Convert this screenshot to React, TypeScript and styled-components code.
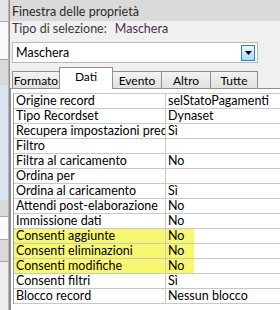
import { Fragment } from 'react';
import styled, { createGlobalStyle } from 'styled-components';

const Global = createGlobalStyle`
  html, body {
    margin: 0;
    padding: 0;
    width: 280px;
    height: 310px;
    overflow: hidden;
    background: #f0f0f0;
  }
  * {
    box-sizing: border-box;
  }
`;

const Frame = styled.div`
  display: flex;
  width: 280px;
  height: 310px;
  font-family: Lato, 'Noto Sans', sans-serif;
  font-size: 12.5px;
  color: #000;
`;

const Strip = styled.div`
  display: flex;
  flex-direction: column;
  width: 9px;
  border-right: 1px solid #b4b4b4;
`;

const StripBlock = styled.div<{ $h: number; $bg: string; $line?: boolean }>`
  height: ${(p) => p.$h}px;
  flex-shrink: 0;
  background: ${(p) => p.$bg};
  border-bottom: ${(p) => (p.$line ? '1px solid #a8a8a8' : 'none')};
`;

const Panel = styled.div`
  flex: 1;
  display: flex;
  flex-direction: column;
  border-left: 1px solid #8e8e8e;
  background: #f0f0f0;
  min-width: 0;
`;

const TitleBar = styled.div`
  height: 21px;
  background: #dadada;
  padding: 2px 0 0 2px;
  line-height: 19px;
  color: #2a2a2a;
  white-space: nowrap;
`;

const Selection = styled.div`
  height: 16px;
  padding: 0 0 0 2px;
  line-height: 16px;
  color: #3b3b3b;
  white-space: nowrap;
`;

const SelValue = styled.span`
  margin-left: 8px;
  color: #4a2e4a;
`;

const Combo = styled.div`
  margin: 5px 0 0 2px;
  width: 246px;
  height: 21px;
  background: #fff;
  border: 1px solid #b9b9b9;
  display: flex;
  align-items: center;
  justify-content: space-between;
  padding: 0 2px 0 3px;
`;

const ComboButton = styled.div`
  width: 14px;
  height: 16px;
  border: 1px solid #3c7fb1;
  background: linear-gradient(#eaf6fd, #a7d9f5);
  display: flex;
  align-items: center;
  justify-content: center;
`;

const Tabs = styled.div`
  display: flex;
  align-items: flex-end;
  height: 22px;
  margin: 4px 0 0 2px;
`;

const Tab = styled.div<{ $w: number; $active?: boolean }>`
  flex-shrink: 0;
  width: ${(p) => p.$w}px;
  height: ${(p) => (p.$active ? 22 : 18)}px;
  border: 1px solid #8f8f8f;
  border-bottom: ${(p) => (p.$active ? 'none' : '1px solid #8f8f8f')};
  margin-left: -1px;
  background: ${(p) => (p.$active ? '#fff' : 'linear-gradient(#f3f3f3, #e1e1e1)')};
  text-align: center;
  font-size: 12px;
  line-height: 17px;
  white-space: nowrap;
  position: relative;
  z-index: ${(p) => (p.$active ? 1 : 0)};

  &:first-child {
    margin-left: 0;
  }
`;

const Page = styled.div`
  flex: 1;
  border-top: 1px solid #8f8f8f;
  border-left: 1px solid #8f8f8f;
  background: #fff;
  padding: 4px 0 0 2px;
  margin-top: -1px;
`;

const Grid = styled.div`
  display: grid;
  grid-template-columns: 152px 1fr;
  border-left: 1px solid #a0a0a0;
  border-top: 1px solid #c8c8c8;
`;

const Cell = styled.div<{ $hl?: boolean; $value?: boolean }>`
  height: 15px;
  line-height: 14px;
  padding-left: 2px;
  border-bottom: 1px solid #c8c8c8;
  border-right: ${(p) => (p.$value ? 'none' : '1px solid #c8c8c8')};
  white-space: nowrap;
  overflow: hidden;
  background: ${(p) =>
    p.$hl
      ? p.$value
        ? 'linear-gradient(to right, #f8f870 0, #f8f870 28px, #fff 28px)'
        : '#f8f870'
      : '#fff'};
`;

const rows: [string, string, boolean?][] = [
  ['Origine record', 'selStatoPagamenti'],
  ['Tipo Recordset', 'Dynaset'],
  ['Recupera impostazioni predefinite', 'Sì'],
  ['Filtro', ''],
  ['Filtra al caricamento', 'No'],
  ['Ordina per', ''],
  ['Ordina al caricamento', 'Sì'],
  ['Attendi post-elaborazione', 'No'],
  ['Immissione dati', 'No'],
  ['Consenti aggiunte', 'No', true],
  ['Consenti eliminazioni', 'No', true],
  ['Consenti modifiche', 'No', true],
  ['Consenti filtri', 'Sì'],
  ['Blocco record', 'Nessun blocco'],
];

const tabs: [string, number][] = [
  ['Formato', 48],
  ['Dati', 54],
  ['Evento', 50],
  ['Altro', 50],
  ['Tutte', 48],
];

const App: React.FC = () => {
  return (
    <Frame>
      <Global />
      <Strip>
        <StripBlock $h={22} $bg="#e6e6e6" $line />
        <StripBlock $h={38} $bg="#fafafa" $line />
        <StripBlock $h={25} $bg="#d9d9d9" />
        <StripBlock $h={115} $bg="#dae4f2" />
        <StripBlock $h={17} $bg="#d9d9d9" $line />
        <StripBlock $h={23} $bg="#fafafa" $line />
        <StripBlock $h={22} $bg="#d9d9d9" $line />
        <StripBlock $h={48} $bg="#eeeeee" />
      </Strip>
      <Panel>
        <TitleBar>Finestra delle proprietà</TitleBar>
        <Selection>
          Tipo di selezione:<SelValue>Maschera</SelValue>
        </Selection>
        <Combo>
          <span>Maschera</span>
          <ComboButton>
            <svg width="7" height="4" viewBox="0 0 7 4">
              <path d="M0 0h7L3.5 4z" fill="#000" />
            </svg>
          </ComboButton>
        </Combo>
        <Tabs>
          {tabs.map(([t, w]) => (
            <Tab key={t} $w={w} $active={t === 'Dati'}>
              {t}
            </Tab>
          ))}
        </Tabs>
        <Page>
          <Grid>
            {rows.map(([label, value, hl]) => (
              <Fragment key={label}>
                <Cell $hl={hl}>{label}</Cell>
                <Cell $hl={hl} $value>
                  {value}
                </Cell>
              </Fragment>
            ))}
          </Grid>
        </Page>
      </Panel>
    </Frame>
  );
};

export default App;
